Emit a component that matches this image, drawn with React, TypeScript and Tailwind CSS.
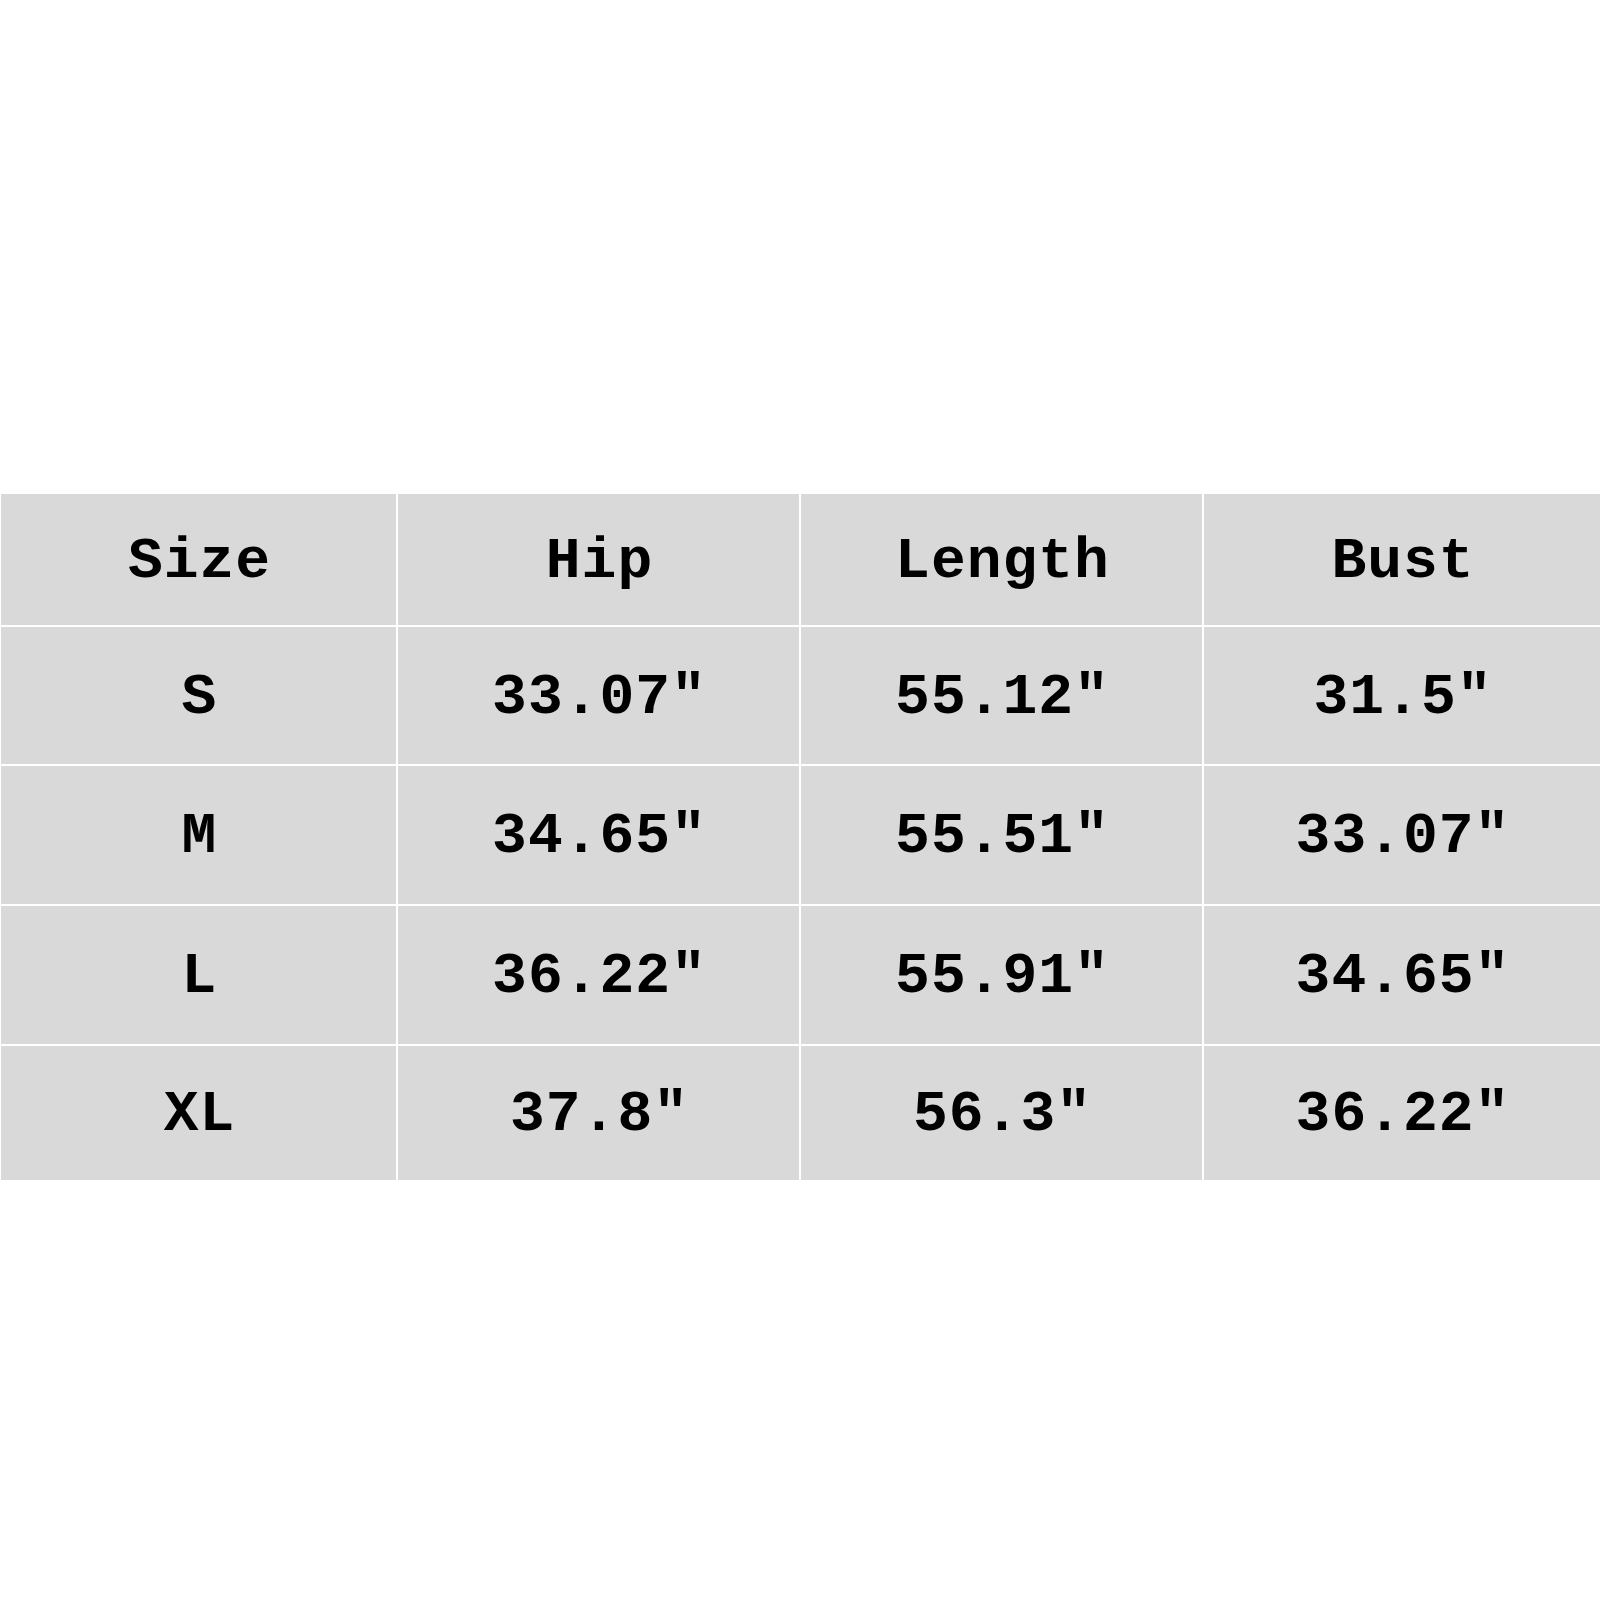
const headers = ["Size", "Hip", "Length", "Bust"];

const rows = [
  { size: "S", hip: '33.07"', length: '55.12"', bust: '31.5"', h: "h-[137px]" },
  { size: "M", hip: '34.65"', length: '55.51"', bust: '33.07"', h: "h-[138px]" },
  { size: "L", hip: '36.22"', length: '55.91"', bust: '34.65"', h: "h-[138px]" },
  { size: "XL", hip: '37.8"', length: '56.3"', bust: '36.22"', h: "h-[134px]" },
];

const Cell = ({ children, h }: { children: React.ReactNode; h: string }) => (
  <div className={`${h} flex items-center justify-center bg-[#d9d9d9] pt-[4px] pl-[2px] text-black`}>
    {children}
  </div>
);

export default function App() {
  return (
    <div className="w-[1600px] h-[1600px] bg-white pt-[494px] pl-[1px]">
      <div
        className="grid grid-cols-[395px_401px_401px_1fr] gap-[2px] bg-white text-[58px] font-bold leading-none tracking-[1px]"
        style={{ fontFamily: '"Liberation Mono", "Courier New", monospace' }}
      >
        {headers.map((label) => (
          <Cell key={label} h="h-[131px]">
            {label}
          </Cell>
        ))}
        {rows.map((row) => (
          <>
            <Cell key={row.size + "-s"} h={row.h}>{row.size}</Cell>
            <Cell key={row.size + "-h"} h={row.h}>{row.hip}</Cell>
            <Cell key={row.size + "-l"} h={row.h}>{row.length}</Cell>
            <Cell key={row.size + "-b"} h={row.h}>{row.bust}</Cell>
          </>
        ))}
      </div>
    </div>
  );
}
